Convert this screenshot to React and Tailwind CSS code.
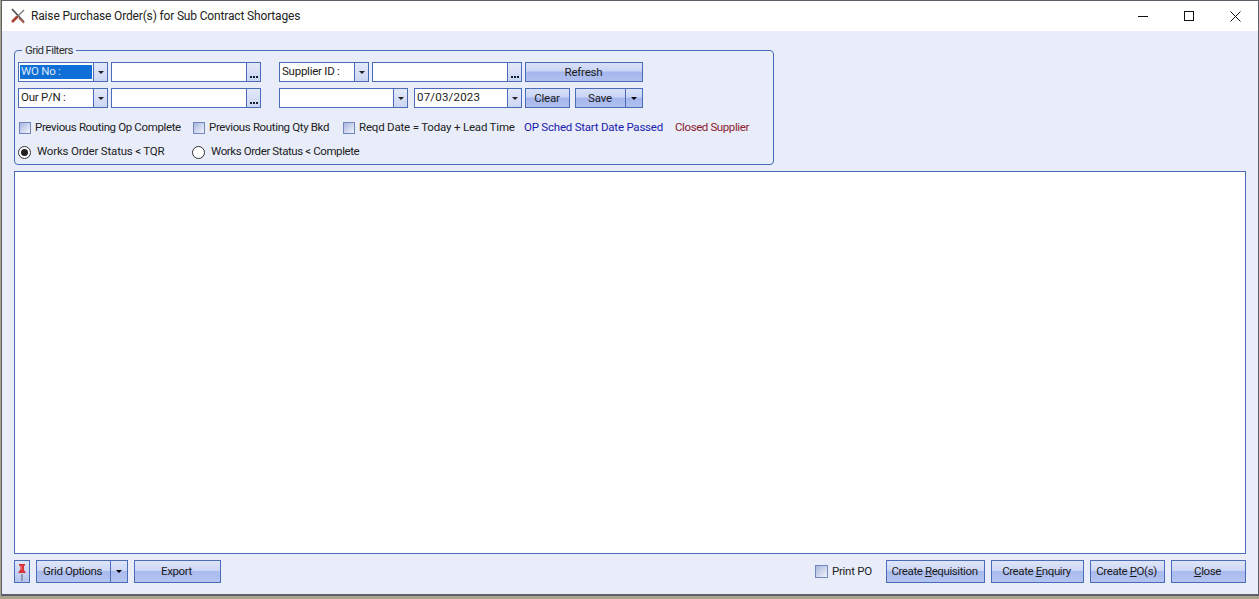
const FONT = "font-['Roboto',Arial,sans-serif]";

function Btn({ w, children, split }) {
  return (
    <div className={`${w} h-[23px] shrink-0 flex border border-[#4a6cb8] bg-[linear-gradient(#dfe6f9_0%,#cdd8f6_45%,#a9bbee_50%,#b4c4f0_100%)] text-[11.5px] text-[#1a1a1a]`}>
      <div className="flex-1 flex items-center justify-center tracking-[-0.4px] pr-[2px]">{children}</div>
      {split && (
        <div className="w-[17px] border-l border-[#4a6cb8] flex items-center justify-center">
          <span className="w-0 h-0 border-x-[3px] border-x-transparent border-t-[3px] border-t-black" />
        </div>
      )}
    </div>
  );
}

function SmallBtn({ w, children, split }) {
  return (
    <div className={`${w} h-[20px] shrink-0 flex border border-[#4a6cb8] bg-[linear-gradient(#d9e1f8_0%,#c9d5f5_45%,#a4b6ed_50%,#b0c0ef_100%)] text-[11.5px] text-[#1a1a1a]`}>
      <div className="flex-1 flex items-center justify-center pt-[1px] pr-[1px] tracking-[-0.2px]">{children}</div>
      {split && (
        <div className="w-[17px] border-l border-[#4a6cb8] flex items-center justify-center">
          <span className="w-0 h-0 border-x-[3px] border-x-transparent border-t-[3px] border-t-black" />
        </div>
      )}
    </div>
  );
}

function Arrow() {
  return (
    <div className="w-[14px] h-full border-l border-[#4a6cb8] bg-[linear-gradient(#e4e9f9,#ccd6f2)] flex items-center justify-center">
      <span className="w-0 h-0 border-x-[3px] border-x-transparent border-t-[3px] border-t-[#222]" />
    </div>
  );
}

function Combo({ w, text, selected, track = "tracking-[-0.25px]" }) {
  return (
    <div className={`${w} h-[20px] shrink-0 flex bg-white border border-[#4a6cb8] text-[11.5px] text-[#1a1a1a] ${track}`}>
      <div className="flex-1 min-w-0 flex items-center pl-[1px]">
        {text && (
          selected
            ? <span className="w-[72px] h-[14px] bg-[#0f6fd6] text-[#dbe9fb] flex items-center pl-[1px]">{text}</span>
            : <span className="pl-[1px]">{text}</span>
        )}
      </div>
      <Arrow />
    </div>
  );
}

function Lookup({ w = "w-[150px]" }) {
  return (
    <div className={`${w} h-[20px] shrink-0 flex bg-white border border-[#4a6cb8]`}>
      <div className="flex-1" />
      <div className="w-[14px] h-full border-l border-[#4a6cb8] bg-[linear-gradient(#e4e9f9,#ccd6f2)] flex items-end justify-center pb-[3px] gap-[1px]">
        <span className="w-[2px] h-[2px] bg-[#123]" />
        <span className="w-[2px] h-[2px] bg-[#123]" />
        <span className="w-[2px] h-[2px] bg-[#123]" />
      </div>
    </div>
  );
}

function Check({ w, track = "tracking-[-0.36px]", children }) {
  return (
    <div className={`${w} shrink-0 flex items-center gap-[4px] text-[11.5px] text-[#222]`}>
      <span className="w-[12px] h-[12px] border border-[#6f87bd] bg-[linear-gradient(135deg,#a9b6de,#f2f4fc)] shrink-0" />
      <span className={`${track} whitespace-nowrap`}>{children}</span>
    </div>
  );
}

function Radio({ w, on, track, children }) {
  return (
    <div className={`${w} shrink-0 flex items-center gap-[6px] text-[11.5px] text-[#222]`}>
      <span className="w-[13px] h-[13px] rounded-full border border-[#333] bg-white flex items-center justify-center shrink-0">
        {on && <span className="w-[7px] h-[7px] rounded-full bg-[#222]" />}
      </span>
      <span className={`${track} whitespace-nowrap`}>{children}</span>
    </div>
  );
}

function Logo() {
  return (
    <svg width="16" height="16" viewBox="0 0 16 16" className="shrink-0">
      <path d="M2 1 L14 14" stroke="#4f4f4f" strokeWidth="1.7" />
      <path d="M14 2 L7 9" stroke="#808080" strokeWidth="1.4" />
      <path d="M7.5 8.5 L2 14" stroke="#a8402f" strokeWidth="2.6" />
      <path d="M9 10 L14 15" stroke="#b5604e" strokeWidth="1.7" />
    </svg>
  );
}

function Pin() {
  return (
    <svg width="14" height="20" viewBox="0 0 14 20">
      <path d="M7 12 L7 19" stroke="#8a8f9a" strokeWidth="1.6" />
      <path d="M4 2 H10 V3.5 L9 4 V8 L11 11 H3 L5 8 V4 L4 3.5 Z" fill="#d8333a" />
      <path d="M6 4 V8" stroke="#f3a0a0" strokeWidth="1" />
    </svg>
  );
}

export default function App() {
  return (
    <div className={`${FONT} w-[1259px] h-[599px] overflow-hidden flex flex-col pl-[1px] bg-[#a9a38f]`}>
      <div className="h-[596px] shrink-0 border border-[#5b6068] border-b-[2px] flex flex-col bg-[#e9edfa]">
        <div className="h-[30px] shrink-0 bg-white flex items-center pl-[8px]">
          <Logo />
          <span className="ml-[5px] text-[12px] text-[#222] tracking-[-0.16px]">Raise Purchase Order(s) for Sub Contract Shortages</span>
          <div className="ml-auto flex items-center h-full">
            <div className="w-[46px] flex justify-center">
              <svg width="10" height="10" viewBox="0 0 10 10"><path d="M0 5.5H10" stroke="#111" /></svg>
            </div>
            <div className="w-[46px] flex justify-center">
              <svg width="10" height="10" viewBox="0 0 10 10"><rect x="0.5" y="0.5" width="9" height="9" fill="none" stroke="#111" /></svg>
            </div>
            <div className="w-[46px] flex justify-center">
              <svg width="11" height="11" viewBox="0 0 11 11"><path d="M0.5 0.5L10.5 10.5M10.5 0.5L0.5 10.5" stroke="#111" /></svg>
            </div>
          </div>
        </div>

        <div className="flex-1 min-h-0 flex flex-col pl-[12px] pr-[12px] pt-[12px]">
          <fieldset className="w-[760px] h-[122px] shrink-0 border border-[#4a6cb8] rounded-[4px] px-[3px]">
            <legend className="ml-[4px] px-[3px] text-[11.5px] leading-[14px] text-[#333] tracking-[-0.65px]">Grid Filters</legend>
            <div className="flex flex-col pt-[5px]">
              <div className="flex">
                <Combo w="w-[90px]" text="WO No :" selected />
                <div className="w-[3px]" />
                <Lookup />
                <div className="w-[18px]" />
                <Combo w="w-[90px]" text="Supplier ID :" />
                <div className="w-[3px]" />
                <Lookup />
                <div className="w-[3px]" />
                <SmallBtn w="w-[118px]">Refresh</SmallBtn>
              </div>
              <div className="flex mt-[6px]">
                <Combo w="w-[90px]" text="Our P/N :" />
                <div className="w-[3px]" />
                <Lookup />
                <div className="w-[18px]" />
                <Combo w="w-[129px]" />
                <div className="w-[6px]" />
                <Combo w="w-[108px]" text="07/03/2023" track="tracking-[0.2px]" />
                <div className="w-[3px]" />
                <SmallBtn w="w-[45px]">Clear</SmallBtn>
                <div className="w-[5px]" />
                <SmallBtn w="w-[68px]" split>Save</SmallBtn>
              </div>
              <div className="flex items-center mt-[13px] h-[14px] pl-[1px]">
                <Check w="w-[174px]">Previous Routing Op Complete</Check>
                <Check w="w-[150px]">Previous Routing Qty Bkd</Check>
                <Check w="w-[181px]" track="tracking-[-0.19px]">Reqd Date = Today + Lead Time</Check>
                <span className="w-[151px] shrink-0 text-[11.5px] text-[#1a1ab0] tracking-[-0.22px] whitespace-nowrap">OP Sched Start Date Passed</span>
                <span className="text-[11.5px] text-[#8b1a2b] tracking-[-0.4px] whitespace-nowrap">Closed Supplier</span>
              </div>
              <div className="flex items-center mt-[10px] h-[14px]">
                <Radio w="w-[174px]" on track="tracking-[-0.19px]">Works Order Status &lt; TQR</Radio>
                <Radio track="tracking-[-0.4px]">Works Order Status &lt; Complete</Radio>
              </div>
            </div>
          </fieldset>

          <div className="flex-1 min-h-0 mt-[6px] bg-white border border-[#4a6cb8]" />

          <div className="h-[40px] shrink-0 flex items-start pt-[6px]">
            <div className="w-[16px] h-[23px] border border-[#4a6cb8] bg-[linear-gradient(#dfe6f9,#b4c4f0)] flex items-center justify-center">
              <Pin />
            </div>
            <div className="w-[6px]" />
            <Btn w="w-[92px]" split>Grid Options</Btn>
            <div className="w-[6px]" />
            <Btn w="w-[87px]">Export</Btn>
            <div className="ml-auto flex items-center">
              <div className="flex items-center gap-[4px] text-[11.5px] text-[#222] mr-[14px]">
                <span className="w-[13px] h-[13px] border border-[#6f87bd] bg-[linear-gradient(135deg,#a9b6de,#f2f4fc)]" />
                <span className="tracking-[-0.25px]">Print PO</span>
              </div>
              <Btn w="w-[99px]"><span>Create <u>R</u>equisition</span></Btn>
              <div className="w-[6px]" />
              <Btn w="w-[93px]"><span>Create <u>E</u>nquiry</span></Btn>
              <div className="w-[6px]" />
              <Btn w="w-[75px]"><span>Create <u>P</u>O(s)</span></Btn>
              <div className="w-[6px]" />
              <Btn w="w-[75px]"><span><u>C</u>lose</span></Btn>
            </div>
          </div>
        </div>
      </div>
    </div>
  );
}
